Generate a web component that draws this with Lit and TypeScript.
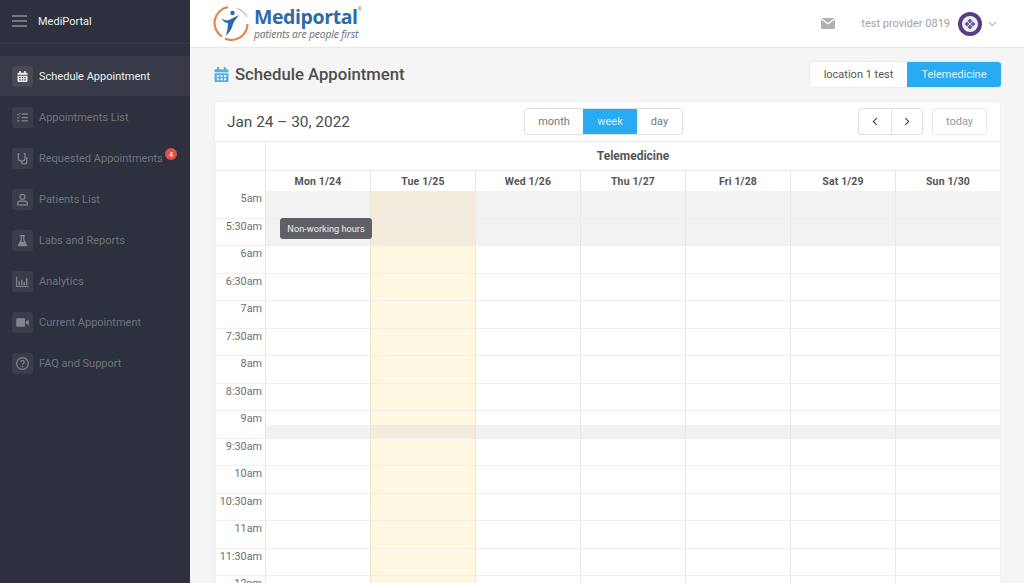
import { LitElement, html, css, svg } from "lit";
import { customElement } from "lit/decorators.js";

const icons: Record<string, unknown> = {
  cal: svg`<path d="M3 5.500a1 1 0 0 1 1-1h1.200V2.500h1.800v2h4v-2h1.800v2H14a1 1 0 0 1 1 1V7H3zM3 8h12v6.500a1 1 0 0 1-1 1H4a1 1 0 0 1-1-1zm2 1.500v1.600h1.800V9.500zm3.100 0v1.600h1.800V9.500zm3.100 0v1.600H13V9.500zM5 12.300v1.600h1.800v-1.600zm3.100 0v1.600h1.800v-1.600zm3.100 0v1.600H13v-1.600z" fill="currentColor" fill-rule="evenodd"/>`,
  list: svg`<path d="M8 5h7.500M8 9h7.500M8 13h7.500" stroke="currentColor" stroke-width="1.500" fill="none"/><path d="M2.500 5l1.200 1.100L6 3.800M2.500 9l1.200 1.100L6 7.800M2.500 13H6" stroke="currentColor" stroke-width="1.200" fill="none"/>`,
  steth: svg`<path d="M5.500 3H4v5a4 4 0 0 0 8 0V3h-1.500M8 12v1.500a2 2 0 0 0 2 2h2a2 2 0 0 0 2-2V10" stroke="currentColor" stroke-width="1.500" fill="none"/><circle cx="14" cy="8.800" r="1.300" fill="currentColor"/>`,
  user: svg`<circle cx="9" cy="5.800" r="3" stroke="currentColor" stroke-width="1.500" fill="none"/><path d="M3.200 15.500v-1.800A2.700 2.700 0 0 1 6 11h6a2.700 2.700 0 0 1 2.800 2.700v1.800z" stroke="currentColor" stroke-width="1.500" fill="none"/>`,
  flask: svg`<path d="M5.800 2.500h6.400v1.300h-1V8l3.300 6.300a1 1 0 0 1-.9 1.500H4.400a1 1 0 0 1-.9-1.500L6.800 8V3.800h-1z" fill="currentColor"/><path d="M8.200 3.800v4.600l-1 2h3.600l-1-2V3.800z" fill="#3b3e4a"/>`,
  chart: svg`<path d="M2 3v12h14" stroke="currentColor" stroke-width="1.300" fill="none"/><path d="M5 9v4.500M8 7v6.500M11 9.500v4M14 5v8.500" stroke="currentColor" stroke-width="1.700" fill="none"/>`,
  video: svg`<rect x="1.500" y="4" width="10.500" height="10" rx="1" fill="currentColor"/><path d="M13 8l3.500-2.500v7L13 10z" fill="currentColor"/>`,
  help: svg`<circle cx="9" cy="9" r="7" stroke="currentColor" stroke-width="1.400" fill="none"/><path d="M7 7.300a2 2 0 1 1 3 1.800c-.7.400-1 .8-1 1.500" stroke="currentColor" stroke-width="1.300" fill="none"/><circle cx="9" cy="12.800" r=".9" fill="currentColor"/>`,
};

const nav = [
  ["cal", "Schedule Appointment"],
  ["list", "Appointments List"],
  ["steth", "Requested Appointments"],
  ["user", "Patients List"],
  ["flask", "Labs and Reports"],
  ["chart", "Analytics"],
  ["video", "Current Appointment"],
  ["help", "FAQ and Support"],
];

const days = ["Mon 1/24", "Tue 1/25", "Wed 1/26", "Thu 1/27", "Fri 1/28", "Sat 1/29", "Sun 1/30"];
const times = ["5am", "5:30am", "6am", "6:30am", "7am", "7:30am", "8am", "8:30am", "9am", "9:30am", "10am", "10:30am", "11am", "11:30am", "12pm"];

@customElement("app-root")
export class AppRoot extends LitElement {
  static styles = css`
    :host { display: block; height: 583px; overflow: hidden; font-family: Roboto, "Liberation Sans", sans-serif; color: #555; }
    * { box-sizing: border-box; }
    .app { display: flex; height: 583px; background: #f5f5f5; }
    .side { width: 190px; flex: none; background: #2d303d; color: #71747f; }
    .brand { height: 44px; display: flex; align-items: center; gap: 11px; padding: 0 12px 1px; border-bottom: 1px solid #363945; color: #eceef0; font-size: 11px; }
    .brand svg { width: 15px; height: 12px; }
    .nav { padding-top: 12px; display: flex; flex-direction: column; }
    .item { height: 41px; display: flex; align-items: center; gap: 6px; padding: 0 0 0 12px; font-size: 11px; white-space: nowrap; position: relative; }
    .item.on { height: 40px; margin-bottom: 1px; background: #383b47; color: #eef0f2; }
    .ico { width: 21px; height: 21px; border-radius: 3px; background: #3b3e4a; display: flex; align-items: center; justify-content: center; color: #82858f; flex: none; }
    .on .ico { background: #474a55; color: #eef0f2; }
    .ico svg { width: 15px; height: 15px; }
    .badge { position: absolute; left: 165px; top: 10px; width: 12px; height: 12px; border-radius: 50%; background: #d9534f; color: #fff; font-size: 8px; display: flex; align-items: center; justify-content: center; }
    .main { flex: 1; min-width: 0; display: flex; flex-direction: column; }
    .top { height: 48px; flex: none; background: #fff; border-bottom: 1px solid #e8e8e8; display: flex; align-items: center; padding: 0 27px 0 23px; }
    .logo { display: flex; align-items: center; gap: 4px; }
    .logo svg { width: 37px; height: 37px; }
    .lname { font-size: 19.500px; line-height: 18px; font-weight: 700; color: #2f6aa8; font-family: "Open Sans", sans-serif; letter-spacing: -0.4px; }
    .lname sup { font-size: 5px; font-weight: 400; color: #777; vertical-align: 13px; line-height: 0; }
    .ltag { font-size: 10.300px; line-height: 11px; margin-top: 3px; font-style: italic; color: #666c74; font-family: "Open Sans", sans-serif; letter-spacing: -0.15px; }
    .right { margin-left: auto; display: flex; align-items: center; font-size: 11px; color: #a3a3a3; }
    .mail { width: 14px; height: 11px; margin-right: 26px; }
    .av { width: 24px; height: 24px; margin-left: 8px; }
    .chev { width: 9px; height: 6px; margin-left: 6px; }
    .head { height: 54px; flex: none; display: flex; align-items: center; padding: 0 23px 2px 21px; }
    .head h1 { margin: 0 0 0 3px; font-size: 16.700px; font-weight: 500; color: #4e4e4e; }
    .head > svg { width: 21px; height: 21px; color: #4bb3ea; }
    .seg { margin-left: auto; display: flex; height: 25px; border-radius: 3px; overflow: hidden; background: #fff; font-size: 11px; box-shadow: 0 0 2px rgba(0,0,0,.15); }
    .seg span { display: flex; align-items: center; justify-content: center; }
    .seg .a { width: 97px; color: #555; }
    .seg .b { width: 94px; background: #29abf4; color: #dff3ff; }
    .card { margin-left: 25px; width: 785px; flex: 1; background: #fff; border-radius: 3px 3px 0 0; box-shadow: 0 0 2px rgba(0,0,0,.08); }
    .bar { height: 39px; display: flex; align-items: center; padding: 0 13px 0 12px; position: relative; }
    .title { font-size: 15.400px; color: #4b4b4b; }
    .views { position: absolute; left: 309px; top: 6px; display: flex; height: 27px; border: 1px solid #e1e1e1; border-radius: 3px; font-size: 11px; color: #777; overflow: hidden; }
    .views span { display: flex; align-items: center; justify-content: center; }
    .views .m { width: 58px; }
    .views .w { width: 54px; background: #29abf4; color: #d8f0ff; }
    .views .d { width: 45px; }
    .pager { margin-left: auto; display: flex; height: 27px; border: 1px solid #e1e1e1; border-radius: 3px; }
    .pager span { width: 31.500px; display: flex; align-items: center; justify-content: center; }
    .pager span + span { border-left: 1px solid #e1e1e1; }
    .pager svg { width: 6px; height: 9px; }
    .today { margin-left: 9px; width: 55px; height: 27px; border: 1px solid #e8e8e8; border-radius: 3px; display: flex; align-items: center; justify-content: center; font-size: 11px; color: #999; }
    .cal { display: grid; grid-template-columns: 49px repeat(7, 1fr); grid-template-rows: 28px 21px; grid-auto-rows: 27.500px; position: relative; border-top: 1px solid #ececec; border-left: 1px solid #f0f0f0; width: 785px; }
    .res { grid-column: 2 / -1; display: flex; align-items: center; justify-content: center; font-weight: 700; font-size: 12px; color: #555; border-left: 1px solid #e6e6e6; }
    .blank2 { border-top: 1px solid #ececec; }
    .dh { border-top: 1px solid #ececec; border-left: 1px solid #e6e6e6; display: flex; align-items: center; justify-content: center; font-weight: 700; font-size: 10.500px; color: #555; letter-spacing: .15px; }
    .t { border-bottom: 1px solid #f0f0f0; text-align: right; padding: 1px 3px 0 0; font-size: 10.800px; color: #6e6e6e; white-space: nowrap; }
    .c { border-bottom: 1px solid #efefef; border-left: 1px solid #e8e8e8; }
    .c.y { background: #fff8e1; border-left-color: #ece6d0; }
    .c.n { background: #f2f2f2; }
    .c.y.n { background: #f3ecdc; }
    .c.half { background: linear-gradient(transparent 50%, #f2f2f2 50%); }
    .c.y.half { background: linear-gradient(#fff8e1 50%, #f3ecdc 50%); }
    .tip { position: absolute; left: 64px; top: 76px; width: 92px; height: 21px; border-radius: 3px; background: #5f6066; color: #eee; font-size: 9.200px; display: flex; align-items: center; justify-content: center; }
  `;

  render() {
    return html`<div class="app">
      <aside class="side">
        <div class="brand">
          <svg viewBox="0 0 15 12"><path d="M0 1h15M0 6h15M0 11h15" stroke="#8b8e98" stroke-width="1.400"/></svg>
          <span>MediPortal</span>
        </div>
        <nav class="nav">
          ${nav.map(([ic, label], i) => html`<div class="item ${i === 0 ? "on" : ""}">
            <span class="ico"><svg viewBox="0 0 18 18">${icons[ic]}</svg></span>
            <span>${label}</span>
            ${i === 2 ? html`<span class="badge">4</span>` : ""}
          </div>`)}
        </nav>
      </aside>
      <div class="main">
        <header class="top">
          <div class="logo">
            <svg viewBox="0 0 37 37">
              <path d="M15 2.200A16 16 0 0 0 9 31.500" stroke="#e0864a" stroke-width="2.200" fill="none"/>
              <path d="M12 33.500A16 16 0 0 0 34.500 19" stroke="#e0864a" stroke-width="2.200" fill="none"/>
              <path d="M24 3.500A16 16 0 0 1 34 12" stroke="#c9c9c9" stroke-width="1.500" fill="none"/>
              <circle cx="19.500" cy="8" r="2.200" fill="#2f6aa8"/>
              <path d="M8 13C12 16 15 16 18 14L26 10C23 14 21 16 20 19C19 24 16 28 13 31C14 26 15 22 15 18C12 18 10 16 8 13z" fill="#2f6aa8"/>
            </svg>
            <div>
              <div class="lname">Mediportal<sup>®</sup></div>
              <div class="ltag">patients are people first</div>
            </div>
          </div>
          <div class="right">
            <svg class="mail" viewBox="0 0 14 11"><path d="M0 1.500V10a1 1 0 0 0 1 1h12a1 1 0 0 0 1-1V1.500L7 6.500z" fill="#b0b0b0"/><path d="M.5 0h13L7 5z" fill="#b0b0b0"/></svg>
            <span>test provider 0819</span>
            <svg class="av" viewBox="0 0 24 24">
              <circle cx="12" cy="12" r="12" fill="#5b3a86"/>
              <circle cx="12" cy="12" r="8" fill="#eef0f4"/>
              <path d="M12 6.500l2.500 2.500-2.500 2.500L9.500 9zM12 12.500l2.500 2.500-2.500 2.500L9.500 15zM6.500 12L9 9.500 11.500 12 9 14.500zM12.500 12L15 9.500 17.500 12 15 14.500z" fill="#6a5a9c"/>
            </svg>
            <svg class="chev" viewBox="0 0 9 6"><path d="M1 1l3.500 3.500L8 1" stroke="#bbb" stroke-width="1.100" fill="none"/></svg>
          </div>
        </header>
        <div class="head">
          <svg viewBox="0 0 18 18">${icons.cal}</svg>
          <h1>Schedule Appointment</h1>
          <div class="seg"><span class="a">location 1 test</span><span class="b">Telemedicine</span></div>
        </div>
        <section class="card">
          <div class="bar">
            <span class="title">Jan 24 – 30, 2022</span>
            <div class="views"><span class="m">month</span><span class="w">week</span><span class="d">day</span></div>
            <div class="pager">
              <span><svg viewBox="0 0 7 10"><path d="M5.500 1l-4 4 4 4" stroke="#444" stroke-width="1.300" fill="none"/></svg></span>
              <span><svg viewBox="0 0 7 10"><path d="M1.500 1l4 4-4 4" stroke="#444" stroke-width="1.300" fill="none"/></svg></span>
            </div>
            <div class="today">today</div>
          </div>
          <div class="cal">
            <div></div><div class="res">Telemedicine</div>
            <div class="blank2"></div>
            ${days.map((d) => html`<div class="dh">${d}</div>`)}
            ${times.map((t, r) => html`<div class="t">${t}</div>
              ${days.map((_, c) => html`<div class="c ${c === 1 ? "y" : ""} ${r < 2 ? "n" : ""} ${r === 8 ? "half" : ""}"></div>`)}`)}
            <div class="tip">Non-working hours</div>
          </div>
        </section>
      </div>
    </div>`;
  }
}
